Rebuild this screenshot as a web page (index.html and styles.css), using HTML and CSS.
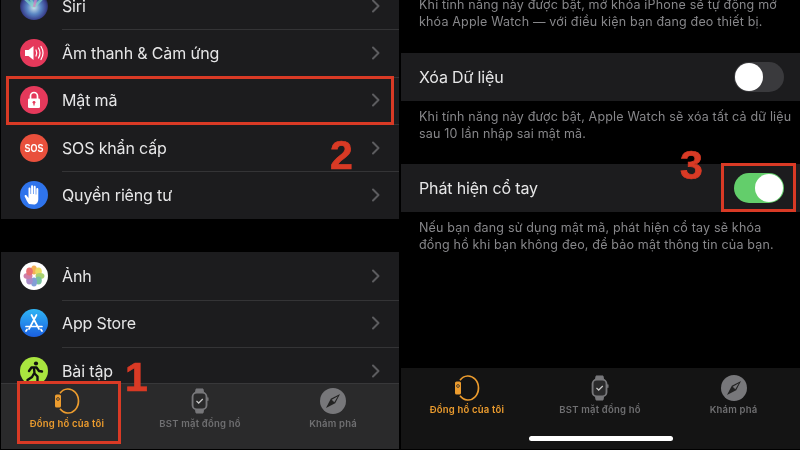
FILE: index.html
```html
<!DOCTYPE html>
<html lang="vi">
<head>
<meta charset="utf-8">
<title>Apple Watch</title>
<link rel="stylesheet" href="styles.css">
</head>
<body>
<svg class="defs" width="0" height="0" aria-hidden="true">
  <symbol id="chev" viewBox="0 0 10 16"><path d="M2 2.500l5.500 5.500-5.500 5.500" fill="none" stroke="currentColor" stroke-width="2" stroke-linecap="round" stroke-linejoin="round"/></symbol>
  <symbol id="mywatch" viewBox="0 0 26 26">
    <path d="M6 5.200A10.500 12 0 1 1 6 20.800" fill="none" stroke="currentColor" stroke-width="1.700"/>
    <rect x="1" y="6.500" width="6" height="13" rx="1.600" fill="currentColor"/>
    <circle cx="4" cy="11" r="1.400" fill="none" stroke="#2a2a2b" stroke-width=".8"/>
  </symbol>
  <symbol id="face" viewBox="0 0 20 28">
    <path d="M5 5l.8-4h7.400l.8 4M5 23l.8 4h7.400l.8-4" fill="currentColor" stroke="currentColor" stroke-linejoin="round"/>
    <rect x="2" y="5" width="15" height="18" rx="4.500" fill="#2a2a2b" stroke="currentColor" stroke-width="2"/>
    <rect x="17.600" y="10" width="1.600" height="4" rx=".8" fill="currentColor"/>
    <path d="M6.200 14l2.400 2.200 4.400-4.400" fill="none" stroke="#c8c8c8" stroke-width="1.300"/>
  </symbol>
  <symbol id="compass" viewBox="0 0 24 24">
    <circle cx="12" cy="12" r="12" fill="currentColor"/>
    <path d="M18.500 5.500L14 14l-8.500 4.500L10 10z" fill="#222"/>
    <path d="M16.500 7.500L10.800 10.800l2.400 2.400z" fill="#77777a"/>
  </symbol>
</svg>

<main class="screens">
  <section class="panel panel-left">
    <div class="scroll-left">
      <ul class="group">
        <li class="row">
          <svg class="app" viewBox="0 0 28 28"><defs><radialGradient id="siri" cx=".5" cy=".55" r=".55"><stop offset="0" stop-color="#cfe3ea"/><stop offset=".45" stop-color="#5a86c4"/><stop offset=".8" stop-color="#3a4390"/><stop offset="1" stop-color="#20233f"/></radialGradient></defs><circle cx="14" cy="14" r="14" fill="url(#siri)"/><path d="M14 15L5 7M14 15l8-8M14 15L9 3" stroke="#7fd6c8" stroke-width="2.500" opacity=".7"/><path d="M14 15l3-12" stroke="#d77fc0" stroke-width="2.500" opacity=".7"/></svg>
          <span class="label">Siri</span><svg class="chev"><use href="#chev"/></svg>
        </li>
        <li class="row">
          <svg class="app" viewBox="0 0 28 28"><circle cx="14" cy="14" r="14" fill="#e5395b"/><path d="M5 11h3.500L13.500 7v14L8.500 17H5z" fill="#fff"/><path d="M16 11c1 2 1 4 0 6M18.500 9c1.800 3 1.800 7 0 10M21 7.500c2.500 4 2.500 9 0 13" fill="none" stroke="#fff" stroke-width="1.200" stroke-linecap="round"/></svg>
          <span class="label">Âm thanh &amp; Cảm ứng</span><svg class="chev"><use href="#chev"/></svg>
        </li>
        <li class="row">
          <svg class="app" viewBox="0 0 28 28"><circle cx="14" cy="14" r="14" fill="#e5395b"/><path d="M10.500 13V10a3.500 3.500 0 0 1 7 0v3" fill="none" stroke="#fff" stroke-width="1.700"/><rect x="8" y="12.500" width="12" height="9.500" rx="1.300" fill="#fff"/><circle cx="14" cy="16.300" r="1.400" fill="#e5395b"/><rect x="13.400" y="16.500" width="1.200" height="3" fill="#e5395b"/></svg>
          <span class="label">Mật mã</span><svg class="chev"><use href="#chev"/></svg>
        </li>
        <li class="row">
          <svg class="app" viewBox="0 0 28 28"><circle cx="14" cy="14" r="14" fill="#e9503c"/></svg>
          <span class="sos">SOS</span>
          <span class="label">SOS khẩn cấp</span><svg class="chev"><use href="#chev"/></svg>
        </li>
        <li class="row">
          <svg class="app" viewBox="0 0 28 28"><circle cx="14" cy="14" r="14" fill="#2f74ec"/><path d="M9 23c-1.500-1.500-3-5-4.300-7.500-.6-1.300 1-2 1.900-1L8.500 17V7.500c0-1.500 2-1.500 2 0V13h.6V5.300c0-1.500 2-1.500 2 0V13h.6V5.800c0-1.500 2-1.500 2 0V13.500h.6V8c0-1.500 2-1.500 2 0v10c0 3-1.500 5.500-4.300 5.500z" fill="#fff"/></svg>
          <span class="label">Quyền riêng tư</span><svg class="chev"><use href="#chev"/></svg>
        </li>
      </ul>
      <ul class="group group-second">
        <li class="row">
          <svg class="app" viewBox="0 0 28 28"><circle cx="14" cy="14" r="14" fill="#fff"/><g opacity=".85"><ellipse cx="14" cy="8" rx="3" ry="4.500" fill="#f2a33a"/><ellipse cx="18.500" cy="9.500" rx="3.300" ry="4" fill="#e8d64a"/><ellipse cx="20" cy="14" rx="4.500" ry="3" fill="#9ccb5a"/><ellipse cx="18.500" cy="18.500" rx="3.300" ry="4" fill="#62b98e"/><ellipse cx="14" cy="20" rx="3" ry="4.500" fill="#6d8fd0"/><ellipse cx="9.500" cy="18.500" rx="3.300" ry="4" fill="#9a79c0"/><ellipse cx="8" cy="14" rx="4.500" ry="3" fill="#c7689a"/><ellipse cx="9.500" cy="9.500" rx="3.300" ry="4" fill="#e4585a"/></g></svg>
          <span class="label">Ảnh</span><svg class="chev"><use href="#chev"/></svg>
        </li>
        <li class="row">
          <svg class="app" viewBox="0 0 28 28"><defs><linearGradient id="store" x1="0" y1="0" x2="0" y2="1"><stop offset="0" stop-color="#30b6f5"/><stop offset="1" stop-color="#1a5fe0"/></linearGradient></defs><circle cx="14" cy="14" r="14" fill="url(#store)"/><path d="M16.500 6L9 20M11.500 6L19 20M6 17.500h16M7 20.500l-1 1.500M21 20.500l1 1.500" fill="none" stroke="#fff" stroke-width="1.700" stroke-linecap="round"/></svg>
          <span class="label">App Store</span><svg class="chev"><use href="#chev"/></svg>
        </li>
        <li class="row">
          <svg class="app" viewBox="0 0 28 28"><circle cx="14" cy="14" r="14" fill="#a9e53f"/><circle cx="16" cy="6.500" r="2.100" fill="#111"/><path d="M9 14l2.500-3.500h5l2.500 3.500 3 .5M14 11l.5 5.500 3 3v4.500M14 16.500L12 20 7.500 23" fill="none" stroke="#111" stroke-width="2.400" stroke-linecap="round" stroke-linejoin="round"/></svg>
          <span class="label">Bài tập</span><svg class="chev"><use href="#chev"/></svg>
        </li>
      </ul>
    </div>
    <nav class="tabbar tabbar-left">
      <div class="tab tab-active"><svg class="tab-icon"><use href="#mywatch"/></svg><span>Đồng hồ của tôi</span></div>
      <div class="tab"><svg class="tab-icon"><use href="#face"/></svg><span>BST mặt đồng hồ</span></div>
      <div class="tab"><svg class="tab-icon"><use href="#compass"/></svg><span>Khám phá</span></div>
    </nav>
    <div class="mark mark-row"></div>
    <div class="mark mark-tab"></div>
    <span class="step step-1">1</span>
    <span class="step step-2">2</span>
  </section>

  <section class="panel panel-right">
    <div class="scroll-right">
      <p class="note">Khi tính năng này được bật, mở khóa iPhone sẽ tự động mở<br>khóa Apple Watch — với điều kiện bạn đang đeo thiết bị.</p>
      <div class="switch-row"><span class="label">Xóa Dữ liệu</span><span class="toggle"></span></div>
      <p class="note">Khi tính năng này được bật, Apple Watch sẽ xóa tất cả dữ liệu<br>sau 10 lần nhập sai mật mã.</p>
      <div class="switch-row"><span class="label">Phát hiện cổ tay</span><span class="toggle toggle-on"></span></div>
      <p class="note">Nếu bạn đang sử dụng mật mã, phát hiện cổ tay sẽ khóa<br>đồng hồ khi bạn không đeo, để bảo mật thông tin của bạn.</p>
    </div>
    <nav class="tabbar tabbar-right">
      <div class="tabs-inner">
        <div class="tab tab-active"><svg class="tab-icon"><use href="#mywatch"/></svg><span>Đồng hồ của tôi</span></div>
        <div class="tab"><svg class="tab-icon"><use href="#face"/></svg><span>BST mặt đồng hồ</span></div>
        <div class="tab"><svg class="tab-icon"><use href="#compass"/></svg><span>Khám phá</span></div>
      </div>
      <div class="home-bar"></div>
    </nav>
    <div class="mark mark-toggle"></div>
    <span class="step step-3">3</span>
  </section>
</main>
</body>
</html>
```
FILE: styles.css
```css
* { box-sizing: border-box; }
html, body { margin: 0; height: 100%; background: #000; }
body { font-family: Inter, "Noto Sans", sans-serif; color: #e9e9ea; overflow: hidden; }
.defs { position: absolute; }
ul { list-style: none; margin: 0; padding: 0; }

.screens { display: flex; gap: 2px; padding-left: 1px; height: 449px; filter: blur(.35px); }
.panel { position: relative; overflow: hidden; height: 449px; background: #000; }
.panel-left { width: 398px; }
.panel-right { width: 399px; }

/* left list */
.scroll-left { margin-top: -18px; }
.group { background: #1c1c1e; }
.group-second { margin-top: 33.600px; }
.row { position: relative; display: flex; align-items: center; height: 47.33px; padding-left: 18.500px; }
.row + .row::before { content: ""; position: absolute; left: 61px; right: 0; top: 0; height: 1px; background: #343436; }
.app { width: 28px; height: 28px; flex: none; }
.label { font-size: 16px; letter-spacing: -.15px; margin-left: 14.500px; color: #e6e6e7; }
.chev { width: 10px; height: 16px; margin-left: auto; margin-right: 18px; color: #5c5c5f; }
.sos { position: absolute; left: 18.500px; width: 28px; text-align: center; font-family: "Liberation Sans", sans-serif; font-size: 10.500px; font-weight: 700; color: #fff; transform: scaleX(.85); }

/* tab bars */
.tabbar { position: absolute; left: 0; right: 0; bottom: 0; }
.tabbar-left { display: grid; grid-template-columns: 132px 134px 132px; height: 66px; background: #2a2a2b; border-top: 1px solid #38383a; padding-top: 4px; }
.tabbar-right { height: 81px; background: #141414; padding-top: 7px; }
.tabs-inner { display: grid; grid-template-columns: 132px 134px 133px; }
.tab { display: flex; flex-direction: column; align-items: center; font-size: 9.500px; font-weight: 600; letter-spacing: .2px; color: #6f6f71; white-space: nowrap; }
.tab-active { color: #ec9c2e; }
.tab-icon { height: 26px; width: 26px; margin-bottom: 4px; color: #77777a; }
.tab-active .tab-icon { color: #ec9c2e; }
.tabbar-right .tab-icon { margin-bottom: 3px; }
.home-bar { width: 144px; height: 5px; border-radius: 3px; background: #fff; margin: 21px auto 0; }

/* right content */
.scroll-right { margin-top: -4px; }
.note { margin: 0; padding: 7px 0 6px 18px; height: 63px; font-size: 12.500px; line-height: 17px; color: #87878a; letter-spacing: .18px; white-space: nowrap; }
.note:first-child { height: 57px; padding-top: 0; }
.switch-row { display: flex; align-items: center; justify-content: space-between; height: 48px; background: #1c1c1e; padding-right: 16px; }
.switch-row .label { margin-left: 18px; }
.toggle { position: relative; width: 50px; height: 30px; border-radius: 15px; background: #3a3a3d; }
.toggle::after { content: ""; position: absolute; top: 1px; left: 1px; width: 28px; height: 28px; border-radius: 50%; background: #fff; }
.toggle-on { background: #63ce6b; }
.toggle-on::after { left: 21px; }

/* annotations */
.mark { position: absolute; border: 3px solid #d93a25; }
.mark-row { left: 5px; top: 76px; width: 388px; height: 49px; }
.mark-tab { left: 16px; top: 381px; width: 104px; height: 63px; }
.mark-toggle { left: 320px; top: 163px; width: 75px; height: 49px; }
.step { position: absolute; font-family: "Liberation Sans", sans-serif; font-weight: 700; font-size: 41px; line-height: 1; color: #d93a25; -webkit-text-stroke: .7px #d93a25; }
.step-1 { left: 124px; top: 357px; }
.step-2 { left: 329px; top: 135px; }
.step-3 { left: 279px; top: 145px; }
```
